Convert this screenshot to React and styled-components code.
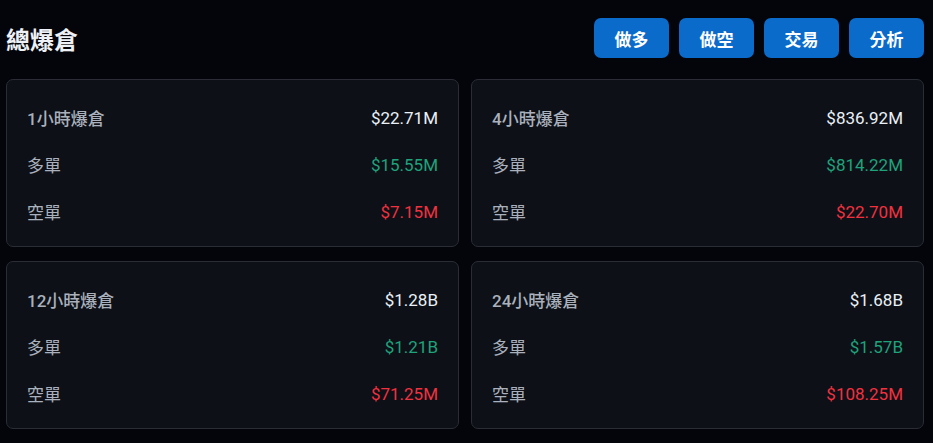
import React from 'react';
import styled, { createGlobalStyle } from 'styled-components';

const GlobalStyle = createGlobalStyle`
  html, body {
    margin: 0;
    padding: 0;
    background: #03050a;
  }
  body {
    font-family: Roboto, "Noto Sans CJK TC", "Noto Sans", sans-serif;
  }
`

const stats = [
  { label: '1小時爆倉', total: '$22.71M', long: '$15.55M', short: '$7.15M' },
  { label: '4小時爆倉', total: '$836.92M', long: '$814.22M', short: '$22.70M' },
  { label: '12小時爆倉', total: '$1.28B', long: '$1.21B', short: '$71.25M' },
  { label: '24小時爆倉', total: '$1.68B', long: '$1.57B', short: '$108.25M' },
];

const actions = ['做多', '做空', '交易', '分析'];

const App = () => {
  return (
    <Page>
      <GlobalStyle />
      <Header>
        <Title>總爆倉</Title>
        <Actions>
          {actions.map((a) => (
            <ActionBtn key={a}>{a}</ActionBtn>
          ))}
        </Actions>
      </Header>
      <Grid>
        {stats.map((s) => (
          <Card key={s.label}>
            <Row>
              <Label strong>{s.label}</Label>
              <Value tone="total">{s.total}</Value>
            </Row>
            <Row>
              <Label>多單</Label>
              <Value tone="long">{s.long}</Value>
            </Row>
            <Row>
              <Label>空單</Label>
              <Value tone="short">{s.short}</Value>
            </Row>
          </Card>
        ))}
      </Grid>
    </Page>
  )
}

const Page = styled.div`
  width: 933px;
  height: 443px;
  box-sizing: border-box;
  padding: 18px 9px 0 6px;
  background: #03050a;
`
const Header = styled.div`
  display: flex;
  align-items: center;
  justify-content: space-between;
  height: 40px;
`
const Title = styled.h1`
  margin: 0;
  font-family: "Noto Sans CJK TC", sans-serif;
  font-size: 24px;
  font-weight: 700;
  color: #eef1f5;
`
const Actions = styled.div`
  display: flex;
  gap: 10px;
`
const ActionBtn = styled.button`
  width: 75px;
  height: 40px;
  padding: 0;
  border: none;
  border-radius: 7px;
  background: #0b6bcb;
  color: #ffffff;
  font-family: "Noto Sans CJK TC", sans-serif;
  font-size: 17px;
  font-weight: 700;
  cursor: pointer;
`
const Grid = styled.div`
  margin-top: 21px;
  display: grid;
  grid-template-columns: 453px 453px;
  column-gap: 12px;
  row-gap: 14px;
`
const Card = styled.div`
  box-sizing: border-box;
  height: 168px;
  padding: 14px 20px 13px;
  background: #0d1017;
  border: 1px solid #2a2d35;
  border-radius: 7px;
`
const Row = styled.div`
  height: 47px;
  display: flex;
  align-items: center;
  justify-content: space-between;
`
const Label = styled.span`
  font-family: Roboto, "Noto Sans CJK TC", sans-serif;
  font-size: 17px;
  font-weight: ${(p) => (p.strong ? 500 : 400)};
  color: #aab1bc;
`
const Value = styled.span`
  font-family: Roboto, sans-serif;
  font-size: 17px;
  color: ${(p) =>
    p.tone === 'long' ? '#1fa37b' : p.tone === 'short' ? '#f2313f' : '#eaf0f6'};
`

export default App;
